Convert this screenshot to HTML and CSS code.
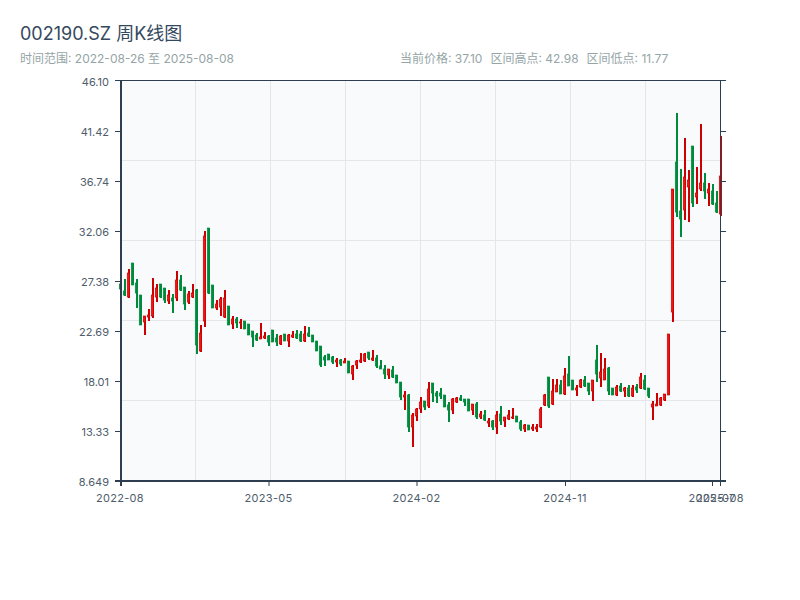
FILE: index.html
```html
<!DOCTYPE html>
<html lang="en">
<head>
  <meta charset="UTF-8" />
  <title>002190.SZ 周K线图</title>
  <link rel="stylesheet" href="styles.css">
</head>
<body>
  <div class="container">
    <div class="header">
      <h1>002190.SZ 周K线图</h1>
      <div class="info-row">
        <div class="range">时间范围: 2022-08-26 至 2025-08-08</div>
        <div class="stats">
          <span>当前价格: 37.10</span>
          <span>区间高点: 42.98</span>
          <span>区间低点: 11.77</span>
        </div>
      </div>
    </div>
    <svg id="chart" class="chart" width="800" height="448"></svg>
  </div>
  <script src="chart.js"></script>
</body>
</html>
```

FILE: styles.css
```css
body {
  font-family: Inter, "Noto Sans CJK SC", sans-serif;
  background: #fff;
  margin: 0;
}
.container {
  width: 800px;
  height: 600px;
}
.header {
  height: 72px;
  padding: 24px 20px 0;
  box-sizing: border-box;
}
h1 {
  font-size: 18px;
  font-weight: 400;
  line-height: 20px;
  color: #34495e;
  margin: 0;
}
.info-row {
  display: flex;
  margin-top: 7px;
  font-size: 12px;
  line-height: 16px;
  color: #95a5a6;
}
.range {
  width: 380px;
}
.stats {
  display: flex;
  gap: 8px;
}
.chart {
  display: block;
}
.plot-bg {
  fill: #f8fafc;
}
.grid {
  stroke: #e4e6ea;
  stroke-width: 1;
}
.axis {
  stroke: #2c3e50;
  stroke-width: 1;
}
.axis-thick {
  stroke: #2c3e50;
  stroke-width: 2;
}
.label {
  font-size: 11px;
  fill: #4f5d6b;
}
.date-label {
  letter-spacing: 0.3px;
}
.wick-up {
  fill: #cc0000;
}
.body-up {
  fill: #f01414;
  stroke: #cc0000;
  stroke-width: 0.7;
}
.wick-down {
  fill: #008a3c;
}
.body-down {
  fill: #008a3c;
  stroke: #008a3c;
  stroke-width: 0.7;
}
```

FILE: chart.js
```js
// Weekly candles as pixel rows in the page: [high, low, bodyTop, bodyBottom, isUp]
var candles = [
  [284,289,284,289,0],[279,296,291,295,0],[269,298,273,297,1],[263,285,263,285,0],[279,308,283,293,0],
  [295,325,295,325,0],[316,335,316,322,1],[309,321,315,317,1],[278,318,295,316,1],[284,302,288,297,1],
  [284,298,284,297,0],[288,303,288,300,0],[290,304,295,301,1],[294,313,298,301,0],[271,301,280,298,1],
  [275,291,280,290,0],[287,310,287,304,0],[291,304,294,302,1],[284,298,293,297,1],[289,354,290,345,0],
  [325,352,333,351,1],[231,327,236,321,1],[228,294,228,293,0],[285,308,285,308,0],[300,310,304,308,1],
  [297,316,299,307,1],[290,318,298,317,1],[306,325,306,325,0],[316,329,319,324,1],[317,328,319,323,0],
  [319,329,322,323,1],[321,329,321,329,0],[324,335,324,335,0],[331,347,331,337,0],[333,341,335,340,0],
  [323,339,337,339,1],[332,339,336,338,1],[335,346,336,342,0],[330,342,330,342,0],[334,346,338,342,0],
  [335,345,336,344,1],[334,341,334,341,0],[334,347,335,341,1],[331,338,335,337,1],[330,339,334,338,0],
  [331,342,334,341,0],[326,342,334,341,1],[327,337,333,336,0],[335,342,335,342,0],[341,351,341,351,0],
  [346,367,346,365,0],[355,366,357,360,0],[354,360,354,360,0],[356,364,357,362,0],[358,367,360,362,1],
  [359,366,360,364,0],[358,363,361,363,1],[361,373,361,373,0],[365,380,366,374,1],[360,369,361,365,1],
  [353,363,360,362,1],[353,362,354,361,1],[352,360,352,358,0],[350,361,358,360,1],[355,368,358,366,0],
  [360,369,366,369,0],[365,379,369,374,0],[369,379,369,375,1],[366,378,370,377,0],[375,383,375,383,0],
  [382,400,382,397,0],[391,410,395,397,1],[394,432,395,427,0],[413,447,415,427,1],[408,421,409,416,1],
  [397,413,402,409,1],[401,410,401,407,0],[382,408,389,406,1],[383,402,383,393,0],[391,403,393,396,0],
  [388,399,393,396,0],[395,407,395,407,0],[402,422,405,410,0],[398,414,399,410,1],[397,403,398,402,1],
  [395,401,398,400,0],[399,406,399,402,0],[399,411,399,411,0],[404,415,404,410,1],[402,419,404,417,0],
  [411,419,414,417,1],[410,421,415,420,0],[418,427,421,423,1],[420,430,421,427,0],[411,434,415,427,1],
  [406,425,414,421,0],[417,427,417,421,1],[410,420,415,419,1],[408,419,417,418,1],[416,422,416,422,0],
  [420,431,422,429,0],[424,432,425,429,1],[425,430,425,430,0],[424,431,427,429,1],[424,432,427,429,1],
  [407,428,409,427,1],[394,406,395,405,1],[377,408,377,406,0],[379,405,391,404,1],[379,392,385,392,1],
  [380,394,385,394,0],[368,395,376,394,1],[356,386,374,386,0],[380,390,380,390,0],[385,396,388,390,1],
  [379,388,380,387,1],[376,387,380,386,0],[383,395,383,391,0],[380,401,380,391,1],[345,382,360,374,0],
  [353,387,372,378,1],[358,380,369,380,1],[367,395,368,391,0],[388,395,388,395,0],[385,396,387,395,1],
  [383,392,386,391,0],[387,397,388,391,1],[385,397,388,396,0],[385,397,388,396,1],[384,393,387,390,0],
  [373,389,377,388,1],[375,390,380,389,0],[388,398,388,396,0],[401,420,404,407,1],[393,406,404,406,1],
  [397,406,398,405,1],[394,401,394,400,1],[334,395,334,395,1],[189,322,189,312,1],[113,217,162,212,0],
  [169,237,211,219,0],[138,220,177,210,1],[170,222,180,187,1],[146,207,146,203,0],[167,204,193,197,1],
  [124,191,183,189,1],[173,199,183,191,0],[183,206,189,193,1],[184,205,191,204,0],[191,213,203,212,0],
  [136,216,176,214,1]
];

var svg = document.getElementById('chart');
var offsetY = 72; // svg starts below the header
var plot = { left: 120, right: 720, top: 81, bottom: 481 };

function add(tag, attrs, text) {
  var el = document.createElementNS('http://www.w3.org/2000/svg', tag);
  for (var k in attrs) {
    el.setAttribute(k, attrs[k]);
  }
  if (text) el.textContent = text;
  svg.appendChild(el);
}

function line(x1, y1, x2, y2, cls) {
  add('line', { x1: x1, y1: y1 - offsetY, x2: x2, y2: y2 - offsetY, 'class': cls });
}

function label(x, y, anchor, text, cls) {
  add('text', { x: x, y: y - offsetY, 'text-anchor': anchor, 'class': 'label ' + cls }, text);
}

add('rect', {
  x: plot.left,
  y: plot.top - offsetY,
  width: plot.right - plot.left,
  height: plot.bottom - plot.top,
  'class': 'plot-bg'
});

// Grid lines
[160, 240, 320, 400].forEach(function(y) {
  line(plot.left, y + 0.5, plot.right, y + 0.5, 'grid');
});
[195, 270, 345, 420, 495, 570, 645].forEach(function(x) {
  line(x + 0.5, plot.top, x + 0.5, plot.bottom, 'grid');
});

// Candles
candles.forEach(function(c, i) {
  var x = 120 + 4 * i;
  var cls = c[4] ? 'up' : 'down';
  add('rect', { x: x, y: c[0] - offsetY, width: 2, height: c[1] - c[0], 'class': 'wick-' + cls });
  add('rect', { x: x - 0.7, y: c[2] - offsetY, width: 2.2, height: c[3] - c[2], 'class': 'body-' + cls });
});

// Axes
line(115, 80.5, 726, 80.5, 'axis');
line(115, 481, 726, 481, 'axis-thick');
line(121, 80, 121, 486, 'axis-thick');
line(720.5, 80, 720.5, 486, 'axis');

// Price ticks, same on both sides
var prices = ['46.10', '41.42', '36.74', '32.06', '27.38', '22.69', '18.01', '13.33', '8.649'];
prices.forEach(function(p, i) {
  var y = 81 + i * 50;
  if (i > 0 && i < 8) {
    line(115, y + 0.5, 120, y + 0.5, 'axis');
    line(721, y + 0.5, 726, y + 0.5, 'axis');
  }
  label(109, y + 4.5, 'end', p, 'price-label');
});

// Date ticks
var dates = [[120, '2022-08'], [268.5, '2023-05'], [416.5, '2024-02'], [565, '2024-11'], [712, '2025-07'], [720, '2025-08']];
dates.forEach(function(d) {
  line(d[0] + 0.5, 482, d[0] + 0.5, 486, 'axis');
  label(d[0], 502, 'middle', d[1], 'date-label');
});
```
